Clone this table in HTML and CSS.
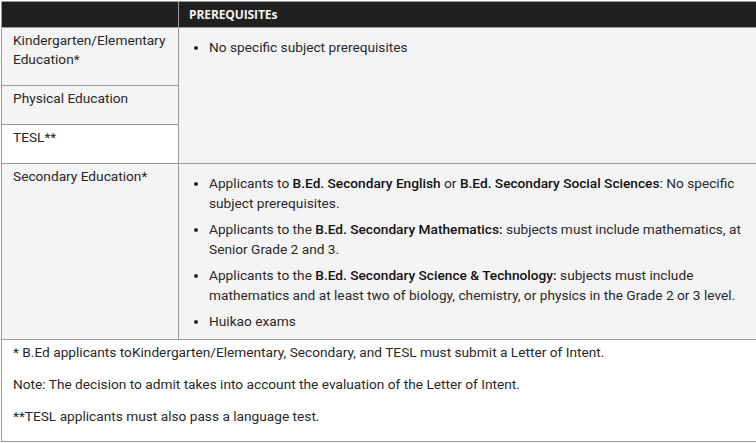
FILE: index.html
```html
<!DOCTYPE html>
<html>
<head>
<meta charset="utf-8">
<link rel="stylesheet" href="styles.css">
</head>
<body>
<table class="prereq">
  <colgroup><col class="c1"><col class="c2"></colgroup>
  <thead>
    <tr class="head"><th></th><th>PREREQUISITEs</th></tr>
  </thead>
  <tbody>
    <tr class="r-kind">
      <td class="prog gray"><p>Kindergarten/Elementary Education*</p></td>
      <td class="req gray" rowspan="3">
        <ul class="first"><li>No specific subject prerequisites</li></ul>
      </td>
    </tr>
    <tr class="r-pe"><td class="prog gray"><p>Physical Education</p></td></tr>
    <tr class="r-tesl"><td class="prog white"><p>TESL**</p></td></tr>
    <tr class="r-sec">
      <td class="prog gray"><p>Secondary Education*</p></td>
      <td class="req gray">
        <ul class="list">
          <li>Applicants to <b>B.Ed. Secondary English</b> or <b>B.Ed. Secondary Social Sciences</b>: No specific subject prerequisites.</li>
          <li>Applicants to the <b>B.Ed. Secondary Mathematics:</b> subjects must include mathematics, at Senior Grade 2 and 3.</li>
          <li>Applicants to the <b>B.Ed. Secondary Science &amp; Technology:</b> subjects must include mathematics and at least two of biology, chemistry, or physics in the Grade 2 or 3 level.</li>
          <li>Huikao exams</li>
        </ul>
      </td>
    </tr>
    <tr class="r-foot">
      <td class="foot" colspan="2">
        <p>* B.Ed applicants toKindergarten/Elementary, Secondary, and TESL must submit a Letter of Intent.</p>
        <p>Note: The decision to admit takes into account the evaluation of the Letter of Intent.</p>
        <p>**TESL applicants must also pass a language test.</p>
      </td>
    </tr>
  </tbody>
</table>
</body>
</html>
```
FILE: styles.css
```css
html, body {
  margin: 0;
  padding: 0;
  background: #ffffff;
  overflow: hidden;
}
body {
  padding: 1px 0 0 1px;
  font-family: Roboto, "Liberation Sans", sans-serif;
  font-size: 13.7px;
  line-height: 19px;
  color: #282828;
}
.prereq {
  border-collapse: collapse;
  table-layout: fixed;
  width: 765px;
  border: 1px solid #9b9b9b;
}
.c1 { width: 177px; }
.prereq td, .prereq th {
  border: 1px solid #9b9b9b;
  vertical-align: top;
  text-align: left;
}
.head th {
  background: #1f201f;
  color: #f4f4f4;
  font-family: "Open Sans", sans-serif;
  font-weight: 700;
  font-size: 12px;
  height: 25px;
  padding: 0 0 0 10px;
  vertical-align: middle;
  letter-spacing: -0.1px;
}
.gray { background: #f4f4f5; }
.white { background: #ffffff; }
.prog { padding: 3px 11px 0 11px; }
.prog p { margin: 0; }
.r-kind td.prog { height: 54px; }
.r-pe td.prog { height: 35px; }
.r-tesl td.prog { height: 35px; }
.req { padding: 0 11px 0 0; }
.req ul {
  margin: 0;
  padding-left: 30px;
  list-style: disc;
}
.req ul.first { margin-top: 10px; }
.req ul.list { margin: 9px 0 8px 0; line-height: 20px; }
.req ul.list li { margin-bottom: 6px; }
.req ul.list li:last-child { margin-bottom: 0; }
.req b { font-weight: 500; color: #111; }
.foot {
  background: #ffffff;
  padding: 3px 11px 15px 11px;
}
.foot p { margin: 0 0 13px 0; line-height: 19px; }
.foot p:last-child { margin-bottom: 0; }
```
